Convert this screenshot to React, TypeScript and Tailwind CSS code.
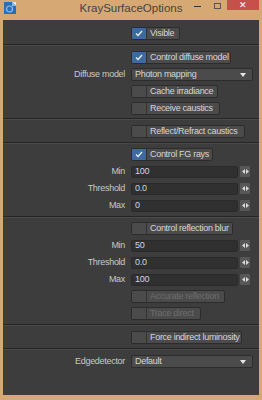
import React from "react";

const font = { fontFamily: '"Liberation Sans", Arial, sans-serif' };

function Sep() {
  return (
    <div className="flex flex-col">
      <div className="h-px bg-[#262626]" />
      <div className="h-px bg-[#4a4a4a]" />
    </div>
  );
}

function Row({ label, children }: { label?: string; children: React.ReactNode }) {
  return (
    <div className="flex h-[13px] items-center">
      <div className="w-[122px] shrink-0 pr-0 text-right text-[9px] leading-none tracking-[-0.3px] text-[#c8c8c8]">
        {label ?? ""}
      </div>
      <div className="ml-[6px] flex h-full items-center">{children}</div>
    </div>
  );
}

function Check({
  label,
  w,
  checked,
  disabled,
}: {
  label: string;
  w: number;
  checked?: boolean;
  disabled?: boolean;
}) {
  return (
    <div
      className="flex h-[13px] overflow-hidden rounded-[2px] border border-[#2c2c2c] bg-[#4b4b4b]"
      style={{ width: w }}
    >
      <div
        className={
          "flex w-[15px] shrink-0 items-center justify-center border-r border-[#333] " +
          (checked ? "bg-[#3d6b9f]" : "bg-[#4b4b4b]")
        }
      >
        {checked && (
          <svg width="8" height="7" viewBox="0 0 8 7">
            <path d="M1 3.5 L3 5.5 L7 1" fill="none" stroke="#e8eef6" strokeWidth="1.3" />
          </svg>
        )}
      </div>
      <div
        className={
          "flex flex-1 items-center pl-[3px] text-[9px] leading-none tracking-[-0.3px] whitespace-nowrap " +
          (disabled ? "text-[#6e6e6e]" : "text-[#d6d6d6]")
        }
      >
        {label}
      </div>
    </div>
  );
}

function Dropdown({ value }: { value: string }) {
  return (
    <div className="flex h-[13px] w-[122px] items-center justify-between rounded-[2px] border border-[#2c2c2c] bg-[#4b4b4b] pl-[3px] pr-[6px] text-[9px] leading-none tracking-[-0.3px] text-[#d6d6d6]">
      <span>{value}</span>
      <svg width="6" height="4" viewBox="0 0 6 4">
        <path d="M0 0 L6 0 L3 4 Z" fill="#e6e6e6" />
      </svg>
    </div>
  );
}

function NumField({ value }: { value: string }) {
  return (
    <div className="flex h-[12px] items-center gap-[2px]">
      <div className="flex h-[12px] w-[107px] items-center rounded-[2px] border border-[#2a2a2a] bg-[#303030] pl-[3px] text-[9px] leading-none tracking-[-0.3px] text-[#cdd6e6]">
        {value}
      </div>
      <div className="flex h-[11px] w-[10px] items-center justify-center rounded-[1px] bg-[#575757]">
        <svg width="7" height="5" viewBox="0 0 7 5">
          <path d="M0 2.5 L3 0 L3 5 Z" fill="#d8d8d8" />
          <path d="M7 2.5 L4 0 L4 5 Z" fill="#d8d8d8" />
        </svg>
      </div>
    </div>
  );
}

export default function App() {
  return (
    <div className="flex h-[400px] w-[262px] flex-col bg-[#d6a874]" style={font}>
      {/* title bar */}
      <div className="relative flex h-[20px] shrink-0 items-start">
        <div className="ml-[4px] mt-[2px]">
          <svg width="12" height="12" viewBox="0 0 12 12">
            <rect x="0" y="0" width="12" height="12" fill="#2a6fb5" />
            <path d="M8 0 L12 0 L12 4 Z" fill="#dfe8f2" />
            <path d="M8 0 L8 4 L12 4" fill="#9bb8d8" />
            <circle cx="5.5" cy="7" r="3" fill="none" stroke="#8fc0ee" strokeWidth="1.2" />
          </svg>
        </div>
        <div className="absolute left-0 right-0 top-[2px] text-center text-[11.5px] leading-[12px] text-[#444]">
          KraySurfaceOptions
        </div>
        <div className="absolute right-[3px] top-0 flex items-start">
          <div className="mr-[13px] mt-[6px] h-px w-[7px] bg-[#333]" />
          <div className="mr-[6px] mt-[3px] h-[6px] w-[7px] border border-[#555]" />
          <div className="flex h-[10px] w-[32px] items-center justify-center bg-[#c7504b] text-[9px] leading-none text-white">
            ✕
          </div>
        </div>
      </div>
      {/* content */}
      <div className="mx-[3px] mb-[5px] flex flex-1 flex-col bg-[#3d3d3d]">
        <div className="flex flex-col pb-[4px] pt-[7px]">
          <Row>
            <Check label="Visible" w={49} checked />
          </Row>
        </div>
        <Sep />
        <div className="flex flex-col gap-[4px] pb-[3px] pt-[5px]">
          <Row>
            <Check label="Control diffuse model" w={100} checked />
          </Row>
          <Row label="Diffuse model">
            <Dropdown value="Photon mapping" />
          </Row>
          <Row>
            <Check label="Cache irradiance" w={87} />
          </Row>
          <Row>
            <Check label="Receive caustics" w={89} />
          </Row>
        </div>
        <Sep />
        <div className="flex flex-col pb-[4px] pt-[5px]">
          <Row>
            <Check label="Reflect/Refract caustics" w={114} />
          </Row>
        </div>
        <Sep />
        <div className="flex flex-col gap-[4px] pb-[4px] pt-[4px]">
          <Row>
            <Check label="Control FG rays" w={82} checked />
          </Row>
          <Row label="Min">
            <NumField value="100" />
          </Row>
          <Row label="Threshold">
            <NumField value="0.0" />
          </Row>
          <Row label="Max">
            <NumField value="0" />
          </Row>
        </div>
        <Sep />
        <div className="flex flex-col gap-[4px] pb-[4px] pt-[4px]">
          <Row>
            <Check label="Control reflection blur" w={102} />
          </Row>
          <Row label="Min">
            <NumField value="50" />
          </Row>
          <Row label="Threshold">
            <NumField value="0.0" />
          </Row>
          <Row label="Max">
            <NumField value="100" />
          </Row>
          <Row>
            <Check label="Accurate reflection" w={94} disabled />
          </Row>
          <Row>
            <Check label="Trace direct" w={70} disabled />
          </Row>
        </div>
        <Sep />
        <div className="flex flex-col pb-[4px] pt-[5px]">
          <Row>
            <Check label="Force indirect luminosity" w={111} />
          </Row>
        </div>
        <Sep />
        <div className="flex flex-col pt-[5px]">
          <Row label="Edgedetector">
            <Dropdown value="Default" />
          </Row>
        </div>
      </div>
    </div>
  );
}
